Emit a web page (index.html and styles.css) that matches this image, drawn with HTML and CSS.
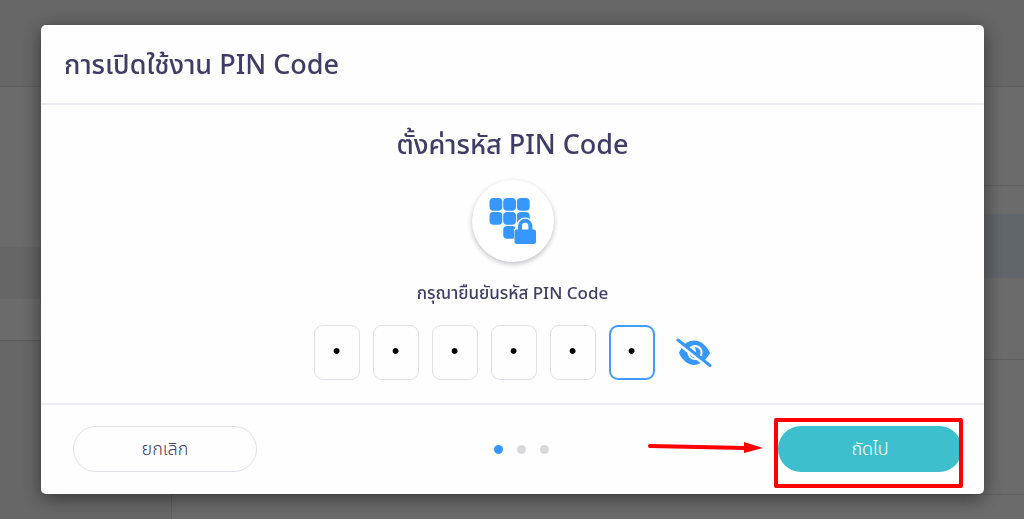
FILE: index.html
```html
<!DOCTYPE html>
<html lang="th">
  <head>
    <meta charset="utf-8" />
    <meta name="viewport" content="width=device-width, initial-scale=1.0" />
    <title>PIN Code</title>
    <link rel="stylesheet" href="styles.css">
  </head>
  <body>
    <div class="page">
      <div class="topbar"></div>
      <div class="columns">
        <div class="sidebar">
          <div class="sidebar-menu">
            <div class="sidebar-active"></div>
          </div>
        </div>
        <div class="content">
          <div class="content-title"></div>
          <div class="content-banner">
            <div class="banner"></div>
          </div>
          <div class="content-card"></div>
        </div>
      </div>
    </div>

    <div class="backdrop">
      <div class="modal" role="dialog" aria-labelledby="modalTitle">
        <div class="modal-header">
          <h1 id="modalTitle">การเปิดใช้งาน PIN Code</h1>
        </div>
        <form class="modal-body">
          <h2>ตั้งค่ารหัส PIN Code</h2>
          <div class="pin-icon">
            <svg viewBox="0 0 48 48" width="48" height="48" fill="#3597ff">
              <rect x="0.500" y="1" width="12.800" height="12.800" rx="4" />
              <rect x="14.200" y="1" width="12.800" height="12.800" rx="4" />
              <rect x="27.900" y="1" width="12.800" height="12.800" rx="4" />
              <rect x="0.500" y="15" width="12.800" height="12.800" rx="4" />
              <rect x="14.200" y="15" width="12.800" height="12.800" rx="4" />
              <rect x="27.900" y="15" width="12.800" height="12.800" rx="4" />
              <rect x="14.200" y="29" width="12.800" height="12.800" rx="4" />
              <path d="M26.500 46V33q0-1 2.500-1v-3a7 7 0 0 1 14 0V46z" stroke="#fff" stroke-width="3" fill="#fff" />
              <rect x="25.500" y="32.500" width="21.500" height="14.500" rx="2" />
              <path d="M31 34v-5a5.200 5.200 0 0 1 10.400 0v5" fill="none" stroke="#3597ff" stroke-width="4" />
            </svg>
          </div>
          <p class="pin-label" id="pinLabel">กรุณายืนยันรหัส PIN Code</p>
          <div class="pin-row" role="group" aria-labelledby="pinLabel">
            <input class="pin-input" type="password" maxlength="1" value="1" aria-label="PIN 1" />
            <input class="pin-input" type="password" maxlength="1" value="2" aria-label="PIN 2" />
            <input class="pin-input" type="password" maxlength="1" value="3" aria-label="PIN 3" />
            <input class="pin-input" type="password" maxlength="1" value="4" aria-label="PIN 4" />
            <input class="pin-input" type="password" maxlength="1" value="5" aria-label="PIN 5" />
            <input class="pin-input active" type="password" maxlength="1" value="6" aria-label="PIN 6" />
            <button class="toggle-pin" type="button" aria-label="แสดงรหัส">
              <svg viewBox="0 0 36 30" width="36" height="30">
                <path d="M3 15C6 7 12 2.500 18 2.500s12.500 4.500 16 12.500C30.500 22 24 27 18 27S6 22 3 15z" fill="#3597ff" />
                <circle cx="19" cy="14.500" r="7.600" fill="#fff" />
                <path d="M19 9a5.600 5.600 0 1 1-5.600 5.600l5 2.400 1.600-3z" fill="#3597ff" />
                <path d="M1 4.500L32 29" stroke="#fff" stroke-width="3" />
                <path d="M2 2L34 27.500" stroke="#3597ff" stroke-width="3" stroke-linecap="round" />
              </svg>
            </button>
          </div>
        </form>
        <div class="modal-footer">
          <button class="btn btn-cancel" type="button">ยกเลิก</button>
          <div class="steps">
            <span class="step current"></span>
            <span class="step"></span>
            <span class="step"></span>
          </div>
          <div class="next-wrap">
            <button class="btn btn-next" type="button">ถัดไป</button>
            <span class="highlight"></span>
            <svg class="arrow" viewBox="0 0 116 14" width="116" height="14">
              <path d="M3 5L98 7" stroke="#f00" stroke-width="4" stroke-linecap="round" />
              <path d="M97 1L116 7L97 12z" fill="#f00" />
            </svg>
          </div>
        </div>
      </div>
    </div>
  </body>
</html>
```
FILE: styles.css
```css
* {
  box-sizing: border-box;
}
body {
  margin: 0;
  font-family: "Noto Sans", "Noto Sans Thai", Kanit, Prompt, sans-serif;
  color: #3f3d66;
}

/* page behind the modal */
.page {
  display: flex;
  flex-direction: column;
  height: 100vh;
  background: #f6f6f8;
}
.topbar {
  height: 87px;
  border-bottom: 1px solid #dcdce0;
}
.columns {
  display: flex;
  flex: 1;
}
.sidebar {
  width: 172px;
  border-right: 1px solid #e2e2e6;
}
.sidebar-menu {
  padding: 160px 0 41px;
  background: #fff;
  border-bottom: 1px solid #d4d4d8;
}
.sidebar-active {
  height: 52px;
  background: #f2f2f5;
}
.content {
  flex: 1;
  background: #fff;
}
.content-title {
  height: 99px;
  border-bottom: 1px solid #e2e2e6;
}
.content-banner {
  padding: 28px 0 81px;
  border-bottom: 1px solid #e2e2e6;
}
.banner {
  height: 64px;
  background: #e8f2ff;
}
.content-card {
  height: 135px;
  border-bottom: 1px solid #e2e2e6;
}

/* modal */
.backdrop {
  position: fixed;
  inset: 0;
  padding: 25px 40px 24px 41px;
  background: rgba(0, 0, 0, 0.58);
}
.modal {
  background: #fefefe;
  border-radius: 5px;
  box-shadow: 0 4px 20px rgba(0, 0, 0, 0.5);
}
.modal-header {
  padding: 20px 23px;
  border-bottom: 2px solid #ebebf3;
}
h1,
h2 {
  margin: 0;
  font-size: 27px;
  line-height: 38px;
  font-weight: 500;
}
.modal-body {
  display: flex;
  flex-direction: column;
  align-items: center;
  padding: 20px 24px 23px;
  border-bottom: 2px solid #ebebf3;
}
.pin-icon {
  display: flex;
  justify-content: center;
  align-items: center;
  width: 82px;
  height: 82px;
  margin-top: 17px;
  border-radius: 50%;
  background: #fff;
  box-shadow: 0 2px 5px rgba(40, 40, 70, 0.3);
}
.pin-label {
  margin: 18px 0 19px;
  font-size: 17px;
  line-height: 26px;
  font-weight: 500;
}
.pin-row {
  display: flex;
  align-items: center;
  gap: 13px;
}
.pin-input {
  width: 46px;
  height: 55px;
  padding: 0 0 4px;
  border: 1px solid #dfdfea;
  border-radius: 9px;
  background: #fefefe;
  color: #000;
  font-family: "Liberation Sans", Arial, sans-serif;
  font-size: 22px;
  text-align: center;
}
.pin-input.active {
  border: 2px solid #3f9cf8;
}
.toggle-pin {
  display: flex;
  margin-left: 8px;
  padding: 0;
  border: 0;
  background: none;
}
.modal-footer {
  display: flex;
  justify-content: space-between;
  align-items: center;
  padding: 21px 22px 22px 32px;
}
.btn {
  width: 184px;
  height: 46px;
  padding: 0;
  border: 0;
  border-radius: 23px;
  font-family: inherit;
  font-size: 18px;
  font-weight: 300;
}
.btn-cancel {
  border: 1px solid #dfdfea;
  background: #fefefe;
  color: #3f3d66;
}
.btn-next {
  background: #3dbfcd;
  color: #fff;
}
.steps {
  display: flex;
  gap: 14px;
  margin-left: 8px;
}
.step {
  width: 9px;
  height: 9px;
  border-radius: 50%;
  background: #d9d9dd;
}
.step.current {
  background: #3597ff;
}
.next-wrap {
  position: relative;
}
.highlight {
  position: absolute;
  inset: -8px -1px -16px -4px;
  border: 4px solid #f00;
  border-radius: 2px;
}
.arrow {
  position: absolute;
  top: 15px;
  right: 199px;
}
```
